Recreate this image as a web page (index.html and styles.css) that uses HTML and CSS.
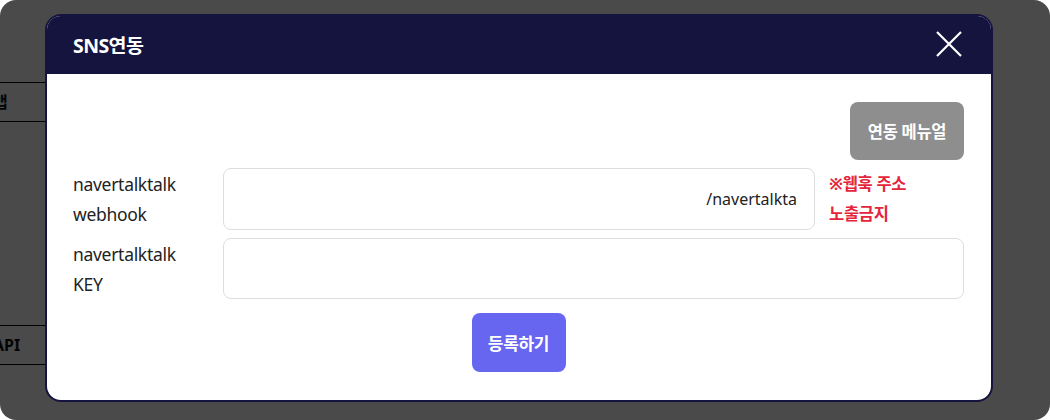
FILE: index.html
```html
<!DOCTYPE html>
<html lang="ko">
<head>
    <meta charset="UTF-8">
    <meta name="viewport" content="width=device-width, initial-scale=1.0">
    <title>SNS연동</title>
    <link rel="stylesheet" href="styles.css">
</head>
<body>
    <div class="page">
        <div class="side-table">
            <div class="side-row">맵</div>
            <div class="side-gap"></div>
            <div class="side-row">API</div>
        </div>
    </div>

    <div class="overlay">
        <div class="modal">
            <div class="modal-header">
                <h2 class="modal-title">SNS연동</h2>
                <button class="close-btn" aria-label="닫기">
                    <svg width="28" height="28" viewBox="0 0 28 28">
                        <path d="M2 2 L26 26 M26 2 L2 26" stroke="#fff" stroke-width="2.2" fill="none"/>
                    </svg>
                </button>
            </div>
            <div class="modal-body">
                <div class="manual-row">
                    <button class="btn btn-gray">연동 메뉴얼</button>
                </div>
                <div class="form-row">
                    <label class="form-label" for="webhook">navertalktalk<br>webhook</label>
                    <input class="form-input" id="webhook" type="text" value="/navertalkta" readonly>
                    <p class="form-note">※웹훅 주소<br>노출금지</p>
                </div>
                <div class="form-row">
                    <label class="form-label" for="key">navertalktalk<br>KEY</label>
                    <input class="form-input" id="key" type="text">
                </div>
                <div class="submit-row">
                    <button class="btn btn-primary">등록하기</button>
                </div>
            </div>
        </div>
    </div>
</body>
</html>
```

FILE: styles.css
```css
* { box-sizing: border-box; }
body { margin: 0; background: #fff; font-family: "Noto Sans", "Noto Sans CJK KR", sans-serif; }

/* page behind the dialog */
.page { height: 420px; padding-top: 82px; }
.side-table { width: 52px; margin-left: -7px; }
.side-row { height: 40px; border-top: 1px solid #000; border-bottom: 1px solid #000; font-weight: 700; font-size: 16px; line-height: 38px; color: #111; }
.side-gap { height: 203px; }

/* dialog */
.overlay { position: fixed; inset: 0; background: rgba(0, 0, 0, 0.71); border-radius: 16px; padding: 14px 0 0 45px; }
.modal { width: 948px; height: 388px; background: #fff; border: 2px solid #14143f; border-radius: 16px; overflow: hidden; }
.modal-header { height: 60px; margin-top: -2px; background: #14143f; display: flex; align-items: center; justify-content: space-between; padding: 0 28px 0 26px; }
.modal-title { margin: 0; color: #fff; font-size: 19.5px; font-weight: 700; letter-spacing: -0.6px; }
.close-btn { background: none; border: 0; padding: 0; width: 28px; height: 28px; cursor: pointer; }
.close-btn svg { display: block; }

.modal-body { padding: 28px 27px 0 26px; }
.manual-row { display: flex; justify-content: flex-end; margin-bottom: 8px; }
.btn { border: 0; border-radius: 8px; color: #fff; font-family: inherit; font-weight: 700; cursor: pointer; }
.btn-gray { width: 114px; height: 58px; background: #8e8e8e; font-size: 16.5px; letter-spacing: -0.3px; }
.btn-primary { width: 94px; height: 59px; background: #6766f0; font-size: 17px; letter-spacing: -0.3px; }

.form-row { display: flex; align-items: center; margin-bottom: 8px; }
.form-label { width: 150px; flex-shrink: 0; font-size: 17.5px; line-height: 30px; color: #222; letter-spacing: -0.3px; }
.form-input { flex: 1; height: 62px; border: 1px solid #ddd; border-radius: 8px; padding: 0 17px; font-family: inherit; font-size: 16px; color: #222; text-align: right; outline: none; }
.form-row + .form-row .form-input { height: 61px; }
.form-note { margin: 0 0 0 14px; width: 135px; color: #e3263b; font-size: 16.5px; font-weight: 700; line-height: 30px; letter-spacing: -0.3px; }

.submit-row { display: flex; justify-content: center; margin-top: 14px; }
```
